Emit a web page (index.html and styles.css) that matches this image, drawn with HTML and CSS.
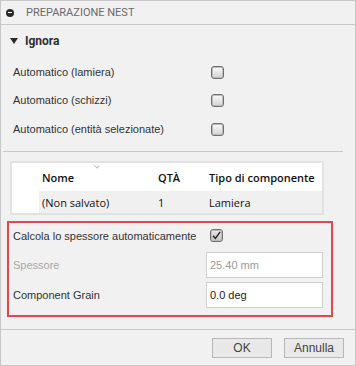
FILE: index.html
```html
<!DOCTYPE html>
<html lang="it">
<head>
  <meta charset="UTF-8" />
  <title>Preparazione Nest</title>
  <link rel="stylesheet" href="styles.css">
</head>
<body>
  <div class="dialog">
    <div class="header">
      <span class="collapse-icon"></span>
      <span class="header-title">PREPARAZIONE NEST</span>
    </div>

    <div class="group-title">
      <span class="tri"></span>
      <span>Ignora</span>
    </div>

    <div class="rows">
      <div class="row">
        <span class="label">Automatico (lamiera)</span>
        <span class="check"></span>
      </div>
      <div class="row">
        <span class="label">Automatico (schizzi)</span>
        <span class="check"></span>
      </div>
      <div class="row last">
        <span class="label">Automatico (entità selezionate)</span>
        <span class="check"></span>
      </div>
    </div>

    <div class="sep"></div>

    <div class="table">
      <div class="thead">
        <span class="col-empty"></span>
        <span class="col-nome">Nome<span class="sort"></span></span>
        <span class="col-qta">QTÀ</span>
        <span class="col-tipo">Tipo di componente</span>
      </div>
      <div class="trow">
        <span class="col-empty"></span>
        <span class="col-nome cell">(Non salvato)</span>
        <span class="col-qta cell">1</span>
        <span class="col-tipo cell">Lamiera</span>
      </div>
    </div>

    <div class="highlight">
      <div class="hrow first">
        <span class="label">Calcola lo spessore automaticamente</span>
        <span class="check checked">
          <svg width="11" height="11" viewBox="0 0 11 11"><path d="M2 5.8 L4.4 8.4 L9.2 1.8" fill="none" stroke="#222" stroke-width="1.4"/></svg>
        </span>
      </div>
      <div class="hrow">
        <span class="label disabled">Spessore</span>
        <span class="field disabled">25.40 mm</span>
      </div>
      <div class="hrow">
        <span class="label">Component Grain</span>
        <span class="field">0.0 deg</span>
      </div>
    </div>

    <div class="footer">
      <button class="btn">OK</button>
      <button class="btn">Annulla</button>
    </div>
  </div>
</body>
</html>
```

FILE: styles.css
```css
body {
  margin: 0;
  background: #f1f1f1;
  font-family: "Liberation Sans", Arial, sans-serif;
}
.dialog {
  width: 356px;
  height: 366px;
  box-sizing: border-box;
  border: 1px solid #c8c8c8;
  background: #f1f1f1;
  color: #333;
  font-size: 11px;
}
.header {
  height: 23px;
  border-bottom: 1px solid #c8c8c8;
  display: flex;
  align-items: center;
  padding-left: 5px;
}
.collapse-icon {
  width: 8px;
  height: 8px;
  border-radius: 50%;
  background: #2b2b2b;
  position: relative;
}
.collapse-icon::after {
  content: "";
  position: absolute;
  left: 2px;
  top: 3.5px;
  width: 4px;
  height: 1px;
  background: #fff;
}
.header-title {
  margin-left: 12px;
  font-family: Roboto, sans-serif;
  font-size: 11px;
  color: #6a6a6a;
}
.group-title {
  height: 31px;
  display: flex;
  align-items: center;
  padding-left: 9px;
  font-family: Roboto, sans-serif;
  font-weight: bold;
  font-size: 12px;
  color: #2e2e2e;
}
.tri {
  width: 0;
  height: 0;
  border-left: 4px solid transparent;
  border-right: 4px solid transparent;
  border-top: 6px solid #2b2b2b;
  margin-right: 7px;
  margin-top: 1px;
}
.rows {
  padding-top: 2px;
}
.row {
  height: 28px;
  display: flex;
  align-items: center;
  padding-left: 12px;
}
.row.last {
  height: 30px;
}
.row .label {
  width: 198px;
}
.check {
  width: 11px;
  height: 11px;
  border: 1px solid #6f6f6f;
  border-radius: 3px;
  background: linear-gradient(to bottom, #fbfbfb, #d2d2d2);
  box-shadow: inset 0 0 0 1px #bdbdbd;
  display: flex;
  align-items: center;
  justify-content: center;
}
.check.checked {
  background: linear-gradient(to bottom, #e9e9e9, #c4c4c4);
}
.sep {
  height: 1px;
  background: #c8c8c8;
  margin: 7px 0 0 2px;
  width: 340px;
}
.table {
  margin: 9px 0 0 9px;
  width: 314px;
  height: 54px;
  box-sizing: border-box;
  border: 2px solid #e2e2e2;
  background: #fff;
  font-family: "Open Sans", sans-serif;
  font-size: 11px;
  color: #111;
}
.thead, .trow {
  display: flex;
  align-items: center;
}
.thead {
  height: 28px;
  font-weight: 600;
}
.trow {
  height: 22px;
}
.col-empty {
  width: 27px;
  align-self: stretch;
  background: #fff;
}
.trow .cell {
  background: #f0f0f0;
  align-self: stretch;
  display: flex;
  align-items: center;
}
.col-nome {
  width: 113px;
  padding-left: 3px;
  position: relative;
}
.col-qta {
  width: 48px;
  padding-left: 3px;
}
.col-tipo {
  flex: 1;
  padding-left: 3px;
}
.sort {
  position: absolute;
  left: 55px;
  top: -7px;
  width: 4px;
  height: 4px;
  border-right: 1px solid #b5b5b5;
  border-bottom: 1px solid #b5b5b5;
  transform: rotate(45deg) scale(1, 0.7);
}
.highlight {
  margin: 6px 0 0 6px;
  width: 326px;
  height: 96px;
  box-sizing: border-box;
  border: 2px solid #e2474a;
  padding: 0 8px 0 4px;
}
.hrow {
  display: flex;
  align-items: center;
  height: 26px;
  margin-top: 4px;
}
.hrow.first {
  height: 25px;
  margin-top: 0;
}
.hrow .label {
  width: 193px;
}
.hrow.first .label {
  width: 197px;
}
.label.disabled {
  color: #a8a8a8;
}
.field {
  flex: 1;
  height: 26px;
  box-sizing: border-box;
  border: 1px solid #cfcfcf;
  background: #fff;
  padding-left: 3px;
  display: flex;
  align-items: center;
  font-size: 11px;
  color: #222;
}
.field.disabled {
  color: #9a9a9a;
}
.footer {
  margin-top: 12px;
  border-top: 1px solid #c8c8c8;
  display: flex;
  justify-content: flex-end;
  gap: 12px;
  padding: 8px 11px 0 0;
}
.btn {
  height: 20px;
  width: 60px;
  border: 1px solid #b8b8b8;
  background: #e8e8e8;
  font-family: "Liberation Sans", Arial, sans-serif;
  font-size: 12px;
  color: #444;
  padding: 0;
}
```
